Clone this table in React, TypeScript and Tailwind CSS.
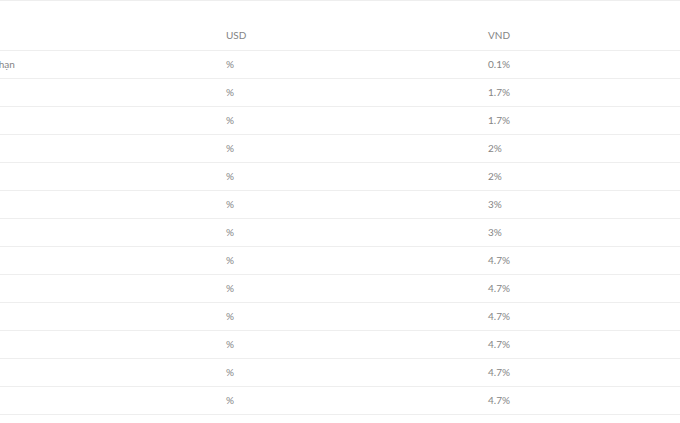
import React from "react";

const rows = [
  ["Không kỳ hạn", "%", "0.1%"],
  ["1 tháng", "%", "1.7%"],
  ["2 tháng", "%", "1.7%"],
  ["3 tháng", "%", "2%"],
  ["4 tháng", "%", "2%"],
  ["5 tháng", "%", "3%"],
  ["6 tháng", "%", "3%"],
  ["7 tháng", "%", "4.7%"],
  ["8 tháng", "%", "4.7%"],
  ["9 tháng", "%", "4.7%"],
  ["10 tháng", "%", "4.7%"],
  ["11 tháng", "%", "4.7%"],
  ["12 tháng", "%", "4.7%"],
];

export default function App() {
  return (
    <div
      className="w-[680px] h-[423px] overflow-hidden bg-white text-[#858585] text-[10px] leading-[14px]"
      style={{ fontFamily: "Lato, 'Open Sans', sans-serif" }}
    >
      <div className="w-[900px] -ml-[55px] border-t border-[#eeeeee]">
        <div className="grid grid-cols-[271px_262px_367px] border-b border-[#eeeeee] h-[50px] items-end pb-[8px]">
          <div className="px-[10px]"></div>
          <div className="px-[10px]">USD</div>
          <div className="px-[10px]">VND</div>
        </div>
        {rows.map((r, i) => (
          <div
            key={i}
            className="grid grid-cols-[271px_262px_367px] border-b border-[#eeeeee] h-[28px] items-center pb-[1px]"
          >
            <div className="px-[10px]">{r[0]}</div>
            <div className="px-[10px]">{r[1]}</div>
            <div className="px-[10px]">{r[2]}</div>
          </div>
        ))}
      </div>
    </div>
  );
}
